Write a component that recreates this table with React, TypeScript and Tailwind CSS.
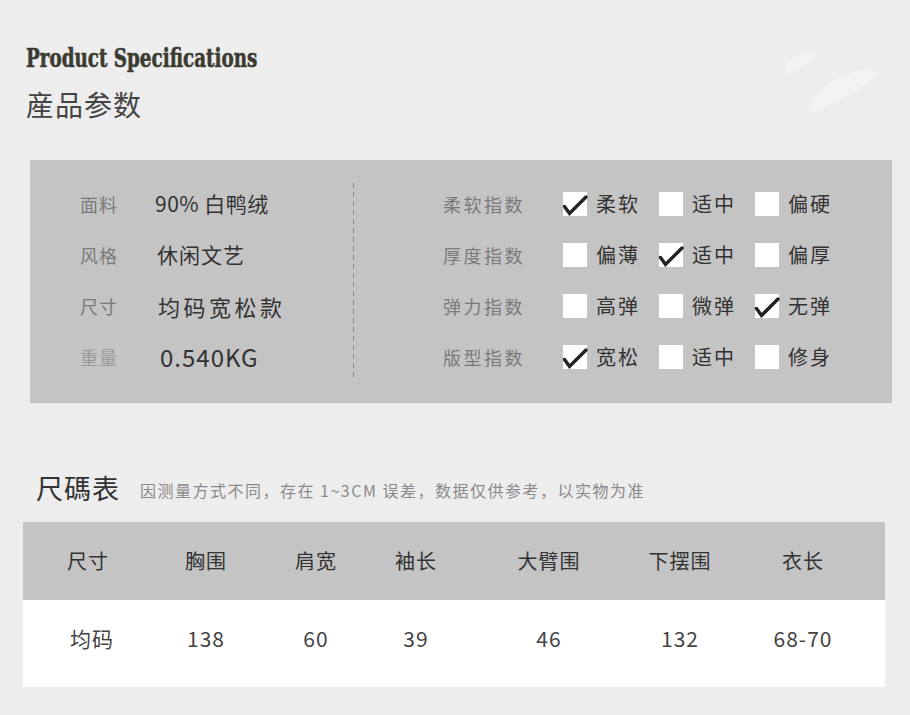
import React from "react";

const CJK = "font-['Noto_Sans_CJK_SC','Noto_Sans',sans-serif]";

function Check() {
  return (
    <svg
      className="absolute left-0 top-0 overflow-visible"
      width="24"
      height="24"
      viewBox="0 0 24 24"
    >
      <path
        d="M1.5 14.5 L6.5 21.5 L23 5"
        fill="none"
        stroke="#222"
        strokeWidth="3.4"
        strokeLinecap="round"
        strokeLinejoin="miter"
      />
    </svg>
  );
}

function Option({ label, checked }: { label: string; checked?: boolean }) {
  return (
    <div className="flex items-center w-[96px]">
      <div className="relative w-[24px] h-[24px] bg-white shrink-0">
        {checked && <Check />}
      </div>
      <span className={`ml-[9px] text-[20px] leading-none text-[#333] tracking-[2px] ${CJK}`}>
        {label}
      </span>
    </div>
  );
}

const leftRows = [
  { k: "面料", v: "90% 白鸭绒", kc: "text-[#7a7a7a]", vc: "ml-0 text-[21px] tracking-[0.5px]" },
  { k: "风格", v: "休闲文艺", kc: "text-[#7a7a7a]", vc: "ml-[2px] text-[21px] tracking-[1px]" },
  { k: "尺寸", v: "均码宽松款", kc: "text-[#7a7a7a]", vc: "ml-[3px] text-[22px] tracking-[3.5px]" },
  { k: "重量", v: "0.540KG", kc: "text-[#9a9a9a]", vc: "ml-[5px] text-[24px] tracking-[1px]" },
];

const rightRows: { k: string; opts: [string, boolean][] }[] = [
  { k: "柔软指数", opts: [["柔软", true], ["适中", false], ["偏硬", false]] },
  { k: "厚度指数", opts: [["偏薄", false], ["适中", true], ["偏厚", false]] },
  { k: "弹力指数", opts: [["高弹", false], ["微弹", false], ["无弹", true]] },
  { k: "版型指数", opts: [["宽松", true], ["适中", false], ["修身", false]] },
];

const cols = ["尺寸", "胸围", "肩宽", "袖长", "大臂围", "下摆围", "衣长"];
const vals = ["均码", "138", "60", "39", "46", "132", "68-70"];

export default function App() {
  return (
    <div className={`relative w-[910px] h-[715px] bg-[#ededed] overflow-hidden ${CJK}`}>
      {/* watermark */}
      <svg className="absolute left-[770px] top-[38px]" width="110" height="80" viewBox="0 0 110 80">
        <path d="M14 30 C22 18 38 12 46 16 C40 24 30 32 18 36 Z" fill="#ffffff" opacity="0.35" />
        <path d="M38 70 C50 44 80 28 108 34 C98 48 72 62 46 74 Z" fill="#ffffff" opacity="0.35" />
      </svg>

      {/* header */}
      <div className="pl-[26px] pt-[42px]">
        <div className="h-[32px] flex items-center">
          <span className="origin-left inline-block scale-x-[0.705] font-['DejaVu_Serif',serif] font-bold text-[26px] leading-none text-[#3b3b30] whitespace-nowrap [-webkit-text-stroke:0.6px_#3b3b30]">
            Product Specifications
          </span>
        </div>
        <div className="mt-[14px] text-[28px] leading-[32px] text-[#444] tracking-[1px]">産品参数</div>
      </div>

      {/* spec panel */}
      <div className="ml-[30px] mt-[40px] w-[862px] h-[243px] bg-[#c4c4c4] flex pt-[18px]">
        <div className="w-[323px] pl-[50px] flex flex-col">
          {leftRows.map((r) => (
            <div key={r.k} className="h-[51px] flex items-center">
              <span className={`w-[75px] text-[18px] tracking-[1px] leading-none ${r.kc}`}>{r.k}</span>
              <span className={`leading-none text-[#333] ${r.vc}`}>{r.v}</span>
            </div>
          ))}
        </div>
        <div className="w-px h-[194px] mt-[5px] bg-[linear-gradient(to_bottom,#8a8a8a_55%,transparent_55%)] bg-[length:1px_9px]" />
        <div className="pl-[89px] flex flex-col">
          {rightRows.map((r) => (
            <div key={r.k} className="h-[51px] flex items-center">
              <span className="w-[120px] text-[18px] tracking-[2.5px] leading-none text-[#7a7a7a]">{r.k}</span>
              {r.opts.map(([l, c], i) => (
                <Option key={i} label={l} checked={c} />
              ))}
            </div>
          ))}
        </div>
      </div>

      {/* size chart title */}
      <div className="ml-[36px] mt-[66px] flex items-end h-[32px]">
        <span className="text-[27px] leading-none text-[#333] tracking-[1px]">尺碼表</span>
        <span className="ml-[20px] mb-[3px] text-[16px] leading-none text-[#8a8a8a] tracking-[1.5px] whitespace-nowrap">
          因测量方式不同，存在 1~3CM 误差，数据仅供参考，以实物为准
        </span>
      </div>

      {/* table */}
      <div className="ml-[23px] mt-[21px] w-[862px]">
        <div className="grid grid-cols-[130px_106px_114px_86px_180px_82px_164px] h-[78px] bg-[#c4c4c4] items-center">
          {cols.map((c) => (
            <div key={c} className="text-center text-[20px] leading-none text-[#333] tracking-[1px]">
              {c}
            </div>
          ))}
        </div>
        <div className="grid grid-cols-[130px_106px_114px_86px_180px_82px_164px] h-[87px] pb-[10px] bg-white items-center">
          {vals.map((v, i) => (
            <div
              key={v}
              className={`text-center text-[21px] leading-none text-[#444] tracking-[1px] ${i === 0 ? "pl-[8px]" : ""}`}
            >
              {v}
            </div>
          ))}
        </div>
      </div>
    </div>
  );
}
